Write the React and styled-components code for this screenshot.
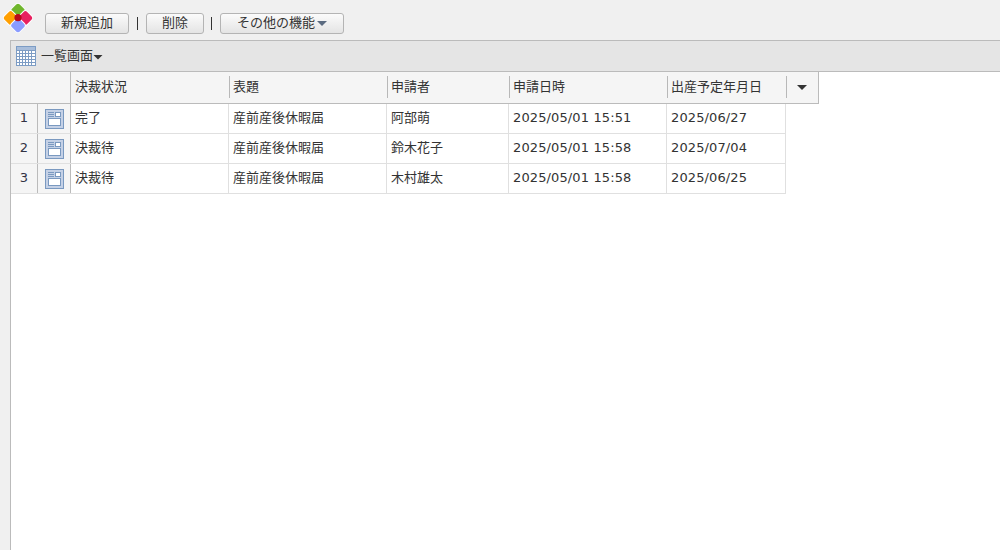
import React from "react";
import styled, { createGlobalStyle } from "styled-components";

const Global = createGlobalStyle`
  html, body { margin: 0; padding: 0; background: #fff; }
  #root { width: 1000px; height: 550px; overflow: hidden; }
  * { box-sizing: border-box; }
`;

const FONT = `"DejaVu Sans", "Noto Sans CJK JP", sans-serif`;

const Page = styled.div`
  width: 1000px; height: 550px; display: flex; flex-direction: column;
  font-family: ${FONT}; font-size: 13px; color: #333; background: #fff;
`;
const Toolbar = styled.div`
  height: 40px; flex: none; background: #f0f0f0; display: flex; align-items: flex-start;
  padding: 3px 0 0 3px;
`;
const Logo = styled.svg`
  width: 30px; height: 30px; flex: none;
`;
const Actions = styled.div`
  display: flex; align-items: center; margin: 10px 0 0 12px; height: 21px;
`;
const Btn = styled.button`
  height: 21px; width: ${p => p.$w}px; padding: 0 0 4px; margin: 0;
  border: 1px solid #b4b4b4; border-radius: 3px;
  background: linear-gradient(#fbfbfb, #e4e4e4);
  font-family: ${FONT}; font-size: 13px; color: #333;
  display: flex; align-items: center; justify-content: center; gap: 2px;
`;
const Sep = styled.span`
  width: 1px; height: 13px; background: #333; margin: 0 ${p => p.$r}px 0 ${p => p.$l}px;
`;
const Caret = styled.span`
  width: 10px; height: 5px; background: ${p => p.$c};
  clip-path: polygon(0 0, 100% 0, 50% 100%);
  display: inline-block; margin-top: ${p => p.$mt || 0}px; flex: none;
`;
const Main = styled.div`
  flex: 1; display: flex; min-height: 0;
`;
const Side = styled.div`
  width: 11px; flex: none; background: #f0f0f0; border-right: 1px solid #bbb;
`;
const Content = styled.div`
  flex: 1; display: flex; flex-direction: column; min-width: 0;
`;
const TitleBar = styled.div`
  height: 32px; flex: none; background: #e5e5e5; border-top: 1px solid #bbb; border-bottom: 1px solid #bbb;
  display: flex; align-items: center; padding-left: 5px; margin-left: -1px; border-left: 1px solid #bbb;
`;
const Title = styled.span`
  margin: 0 0 3px 5px; font-size: 13px; color: #333;
`;
const Head = styled.div`
  width: 808px; height: 32px; flex: none; display: flex; background: #f5f5f5;
  border-right: 1px solid #bbb; border-bottom: 1px solid #bbb;
`;
const Stub = styled.div`
  width: 60px; flex: none; border-right: 1px solid #bbb;
`;
const HeadCell = styled.div`
  width: ${p => p.$w}px; flex: none; padding: 0 0 4px 4px; display: flex; align-items: center;
  position: relative; font-size: 13px; color: #333;
  &::after {
    content: ""; position: absolute; right: -1px; top: 4px; bottom: 5px; width: 1px; background: #b8b8b8;
  }
`;
const HeadEnd = styled.div`
  flex: 1; display: flex; align-items: center; justify-content: center; padding-top: 0;
`;
const Row = styled.div`
  height: 30px; flex: none; display: flex; width: 775px; border-bottom: 1px solid #e0e0e0;
`;
const NumCell = styled.div`
  width: 27px; flex: none; background: #f5f5f5; border-right: 1px solid #bbb; padding-bottom: 2px;
  display: flex; align-items: center; justify-content: center; font-size: 13px; color: #334;
`;
const IconCell = styled.div`
  width: 33px; flex: none; background: #f5f5f5; border-right: 1px solid #bbb;
  display: flex; align-items: center; justify-content: center;
`;
const Cell = styled.div`
  width: ${p => p.$w}px; flex: none; padding: 0 0 ${p => (p.$latin ? 2 : 4)}px 4px; display: flex; align-items: center;
  border-right: 1px solid #e0e0e0; font-size: 13px; color: #333; white-space: nowrap;
  letter-spacing: ${p => (p.$latin ? "0.12px" : "0")};
`;

const widths = [158, 158, 122, 158, 119];
const headers = ["決裁状況", "表題", "申請者", "申請日時", "出産予定年月日"];
const rows = [
  ["完了", "産前産後休暇届", "阿部萌", "2025/05/01 15:51", "2025/06/27"],
  ["決裁待", "産前産後休暇届", "鈴木花子", "2025/05/01 15:58", "2025/07/04"],
  ["決裁待", "産前産後休暇届", "木村雄太", "2025/05/01 15:58", "2025/06/25"],
];

const petal = (x, y, fill) => (
  <rect x={x - 6} y={y - 6} width="12" height="12" rx="3" fill={fill} stroke="#fff" strokeWidth="1"
    transform={`rotate(45 ${x} ${y})`} />
);

const LogoIcon = () => (
  <Logo viewBox="0 0 30 30">
    {petal(15, 7.6, "#6fb62c")}
    {petal(7.6, 15, "#ff9f00")}
    {petal(22.4, 15, "#e8205f")}
    {petal(15, 22.4, "#8a9cff")}
    <circle cx="15" cy="14.7" r="3.6" fill="#b80a1c" />
  </Logo>
);

const GridIcon = () => (
  <svg width="20" height="20" viewBox="0 0 20 20" style={{ flex: "none" }}>
    <rect x="0.5" y="0.5" width="19" height="19" fill="#fff" stroke="#7c9cc4" />
    <rect x="1" y="1" width="18" height="3" fill="#a9bedb" />
    <path d="M0 4.5H20M0 7.5H20M0 10.5H20M0 13.5H20M0 16.5H20M3.5 4V20M6.5 4V20M9.5 4V20M12.5 4V20M15.5 4V20" stroke="#7c9cc4" strokeWidth="1" />
  </svg>
);

const FormIcon = () => (
  <svg width="19" height="20" viewBox="0 0 19 20">
    <rect x="0.5" y="0.5" width="18" height="19" fill="#c5d1e6" stroke="#7a99c0" />
    <rect x="3.5" y="9.5" width="12" height="7" fill="#fff" stroke="#7a99c0" />
    <rect x="10.5" y="3.5" width="5" height="4" fill="#fff" stroke="#7a99c0" />
    <path d="M3 3.5H9M3 5.5H9M3 7.5H9" stroke="#7a99c0" />
  </svg>
);

export default function App() {
  return (
    <Page>
      <Global />
      <Toolbar>
        <LogoIcon />
        <Actions>
          <Btn $w={84}>新規追加</Btn>
          <Sep $l={8} $r={8} />
          <Btn $w={58}>削除</Btn>
          <Sep $l={7} $r={8} />
          <Btn $w={124}>その他の機能<Caret $c="#5b6b80" $mt={4} /></Btn>
        </Actions>
      </Toolbar>
      <Main>
        <Side />
        <Content>
          <TitleBar>
            <GridIcon />
            <Title>一覧画面</Title>
            <Caret $c="#333" $mt={2} />
          </TitleBar>
          <Head>
            <Stub />
            {headers.map((h, i) => (
              <HeadCell key={h} $w={widths[i]}>{h}</HeadCell>
            ))}
            <HeadEnd><Caret $c="#333" /></HeadEnd>
          </Head>
          {rows.map((r, i) => (
            <Row key={i}>
              <NumCell>{i + 1}</NumCell>
              <IconCell><FormIcon /></IconCell>
              {r.map((c, j) => (
                <Cell key={j} $w={widths[j]} $latin={j >= 3}>{c}</Cell>
              ))}
            </Row>
          ))}
        </Content>
      </Main>
    </Page>
  );
}
